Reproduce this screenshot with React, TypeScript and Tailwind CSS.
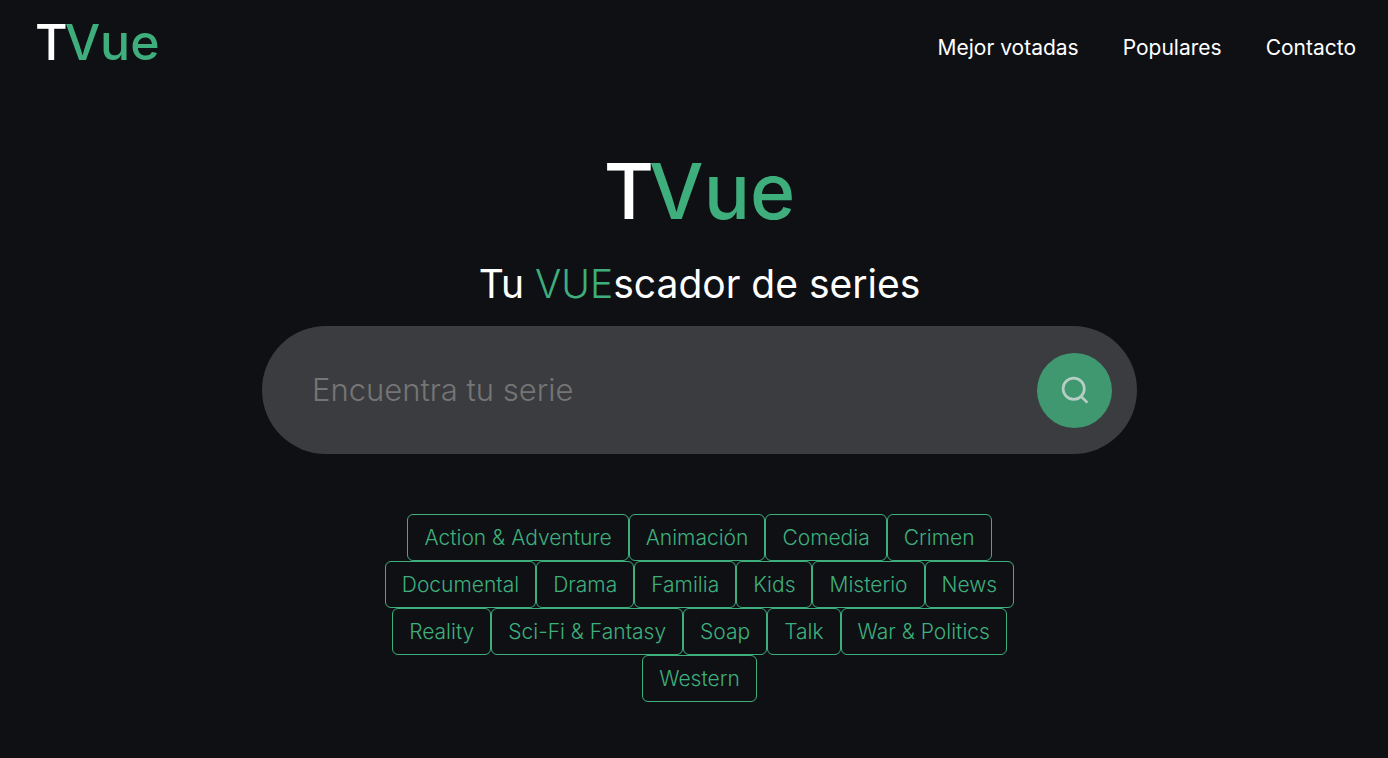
import { useState } from "react";

const genres = [
  "Action & Adventure",
  "Animación",
  "Comedia",
  "Crimen",
  "Documental",
  "Drama",
  "Familia",
  "Kids",
  "Misterio",
  "News",
  "Reality",
  "Sci-Fi & Fantasy",
  "Soap",
  "Talk",
  "War & Politics",
  "Western",
];

const links = ["Mejor votadas", "Populares", "Contacto"];

function Header() {
  return (
    <header className="flex items-start justify-between pl-[35px] pr-8 pt-3">
      <a href="#" className="flex text-[50px] leading-[60px] font-medium">
        <span className="text-white">T</span>
        <span className="-ml-[3px] text-[#3eaf7c]">Vue</span>
      </a>
      <nav className="flex gap-11 pt-5 text-[21px] leading-8 text-white">
        {links.map((link) => (
          <a key={link} href="#">
            {link}
          </a>
        ))}
      </nav>
    </header>
  );
}

function SearchForm() {
  const [query, setQuery] = useState("");
  return (
    <form
      onSubmit={(event) => event.preventDefault()}
      className="mt-3 flex h-32 w-full max-w-[875px] items-center rounded-full bg-[#3b3c3f] pl-[50px] pr-[25px]"
    >
      <input
        type="text"
        aria-label="Encuentra tu serie"
        placeholder="Encuentra tu serie"
        value={query}
        onChange={(event) => setQuery(event.target.value)}
        className="min-w-0 flex-1 bg-transparent text-[31px] font-light text-white outline-none placeholder:text-[#757575]"
      />
      <button
        type="submit"
        aria-label="Buscar"
        className="flex size-[75px] shrink-0 items-center justify-center rounded-full bg-[#3f9870]"
      >
        <svg
          viewBox="0 0 28 28"
          className="size-7"
          fill="none"
          stroke="#b7cec4"
          strokeWidth="2.7"
          strokeLinecap="round"
        >
          <circle cx="12.7" cy="12.7" r="10.6" />
          <path d="M20.6 20.9 25.6 25.9" />
        </svg>
      </button>
    </form>
  );
}

export default function App() {
  return (
    <div className="min-h-screen bg-[#0f1014] pb-14 font-['Inter','Open_Sans',sans-serif]">
      <Header />
      <main className="flex flex-col items-center pl-[11px]">
        <div className="mt-[71px] flex text-[77px] leading-24 font-medium">
          <span className="text-white">T</span>
          <span className="-ml-[5px] text-[#3eaf7c]">Vue</span>
        </div>
        <h1 className="mt-[15px] text-[39px] leading-[60px] text-white">
          Tu <span className="font-light text-[#3eaf7c]">VUE</span>scador de series
        </h1>
        <SearchForm />
        <div className="mt-15 flex max-w-[650px] flex-wrap justify-center">
          {genres.map((genre) => (
            <button
              key={genre}
              type="button"
              className="rounded-md border border-[#3eaf7c] px-4 py-2 text-[21px] leading-[29px] font-[350] text-[#3eaf7c]"
            >
              {genre}
            </button>
          ))}
        </div>
      </main>
    </div>
  );
}
